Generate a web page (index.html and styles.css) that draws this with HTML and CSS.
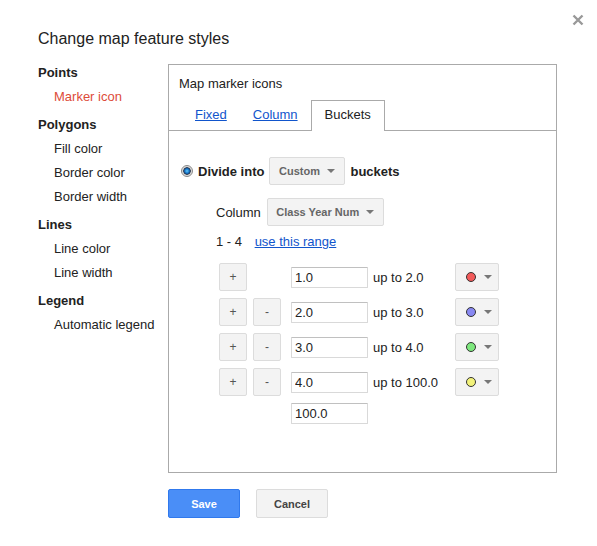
FILE: index.html
```html
<!DOCTYPE html>
<html lang="en">
<head>
  <meta charset="UTF-8">
  <title>Change map feature styles</title>
  <link rel="stylesheet" href="styles.css">
</head>
<body>
  <div class="dialog">
    <a class="close" href="#" title="Close">
      <svg width="12" height="12" viewBox="0 0 12 12"><path d="M1.5 1.5L10.5 10.5M10.5 1.5L1.5 10.5" stroke="#999" stroke-width="2.4"/></svg>
    </a>
    <h1 class="title">Change map feature styles</h1>
    <div class="main flex">
      <ul class="nav">
        <li class="nav-head">Points</li>
        <li class="nav-item active">Marker icon</li>
        <li class="nav-head">Polygons</li>
        <li class="nav-item">Fill color</li>
        <li class="nav-item">Border color</li>
        <li class="nav-item">Border width</li>
        <li class="nav-head">Lines</li>
        <li class="nav-item">Line color</li>
        <li class="nav-item">Line width</li>
        <li class="nav-head">Legend</li>
        <li class="nav-item">Automatic legend</li>
      </ul>
      <div class="panel">
        <div class="panel-title">Map marker icons</div>
        <div class="tabs flex">
          <a class="tab" href="#">Fixed</a>
          <a class="tab" href="#">Column</a>
          <span class="tab tab-on">Buckets</span>
        </div>
        <div class="panel-body">
          <div class="flex flex-align-center">
            <span class="radio"></span>
            <b class="strong">Divide into</b>
            <span class="btn drop drop-custom">Custom <i class="caret"></i></span>
            <b class="strong">buckets</b>
          </div>
          <div class="sub">
            <div class="flex flex-align-center col-row">
              <span class="col-label">Column</span>
              <span class="btn drop">Class Year Num <i class="caret"></i></span>
            </div>
            <div class="range">1 - 4 <a href="#">use this range</a></div>
            <div class="buckets">
              <div class="bucket flex flex-align-center">
                <span class="btn sq">+</span>
                <span class="sq-gap"></span>
                <input type="text" value="1.0">
                <span class="upto">up to 2.0</span>
                <span class="btn color"><i class="dot" style="background:#f25a5a"></i><i class="caret"></i></span>
              </div>
              <div class="bucket flex flex-align-center">
                <span class="btn sq">+</span>
                <span class="btn sq">-</span>
                <input type="text" value="2.0">
                <span class="upto">up to 3.0</span>
                <span class="btn color"><i class="dot" style="background:#8888f2"></i><i class="caret"></i></span>
              </div>
              <div class="bucket flex flex-align-center">
                <span class="btn sq">+</span>
                <span class="btn sq">-</span>
                <input type="text" value="3.0">
                <span class="upto">up to 4.0</span>
                <span class="btn color"><i class="dot" style="background:#7ee87e"></i><i class="caret"></i></span>
              </div>
              <div class="bucket flex flex-align-center">
                <span class="btn sq">+</span>
                <span class="btn sq">-</span>
                <input type="text" value="4.0">
                <span class="upto">up to 100.0</span>
                <span class="btn color"><i class="dot" style="background:#f2f27a"></i><i class="caret"></i></span>
              </div>
              <div class="bucket last flex">
                <span class="sq-gap"></span>
                <span class="sq-gap"></span>
                <input type="text" value="100.0">
              </div>
            </div>
          </div>
        </div>
      </div>
    </div>
    <div class="actions flex">
      <span class="btn btn-blue">Save</span>
      <span class="btn btn-cancel">Cancel</span>
    </div>
  </div>
</body>
</html>
```

FILE: styles.css
```css
*{
  margin: 0;
  padding: 0;
  box-sizing: border-box;
}
.flex{display:flex;}
.flex-align-center{align-items:center;}

body{
  background: #fff;
  font-family: "Liberation Sans", Arial, sans-serif;
  font-size: 13px;
  color: #222;
}
.dialog{
  position: relative;
  width: 597px;
  height: 546px;
  padding: 29px 0 0 38px;
}
.close{
  position: absolute;
  top: 14px;
  left: 572px;
  width: 12px;
  height: 12px;
}
.close svg{display:block;}
.title{
  font-size: 16px;
  font-weight: normal;
  line-height: 20px;
  color: #222;
  margin-bottom: 11px;
}

/* left nav */
.nav{
  list-style: none;
  width: 130px;
  padding-top: 1px;
}
.nav li{
  line-height: 24px;
  white-space: nowrap;
}
.nav-head{
  font-weight: bold;
  margin-top: 4px;
}
.nav-head:first-child{margin-top:0;}
.nav-item{
  padding-left: 16px;
}
.nav-item.active{
  color: #dd4b39;
}

/* panel */
.panel{
  margin-top: 4px;
  width: 389px;
  height: 409px;
  border: 1px solid #aaa;
}
.panel-title{
  padding: 11px 0 0 10px;
  line-height: 16px;
}
.tabs{
  margin-top: 8px;
  padding-left: 13px;
  border-bottom: 1px solid #aaa;
  height: 31px;
}
.tab{
  display: block;
  padding: 0 13px;
  line-height: 30px;
  color: #15c;
  text-decoration: underline;
}
.tab-on{
  color: #222;
  text-decoration: none;
  background: #fff;
  border: 1px solid #aaa;
  border-bottom: 0;
  height: 31px;
  line-height: 28px;
  padding: 0 13px;
}
.panel-body{
  padding: 26px 0 0 12px;
}
.radio{
  width: 12px;
  height: 12px;
  border-radius: 50%;
  border: 1px solid #888;
  background: radial-gradient(circle at 50% 50%, #6cf 0, #2a8fd8 1.5px, #1560a8 2.6px, #1a2a44 3.4px, #ccc 4px, #e4e4e4 5px, #f4f4f4 6px);
  margin-right: 5px;
}
.strong{
  font-weight: bold;
}

/* google style buttons */
.btn{
  display: inline-flex;
  align-items: center;
  justify-content: center;
  height: 28px;
  border: 1px solid #dcdcdc;
  border-radius: 2px;
  background: #f3f3f3;
  color: #444;
  font-size: 11px;
  font-weight: bold;
  white-space: nowrap;
}
.drop{
  padding: 0 10px 0 9px;
  color: #666;
  margin: 0 5px 0 5px;
}
.drop-custom{
  width: 76px;
  margin: 0 5px 0 5px;
}
.caret{
  display: inline-block;
  width: 0;
  height: 0;
  border-left: 4px solid transparent;
  border-right: 4px solid transparent;
  border-top: 4px solid #777;
  margin-left: 7px;
}
.sub{
  padding-left: 35px;
}
.col-row{
  margin-top: 13px;
}
.col-row .drop{
  width: 117px;
  padding: 0 8px;
  margin-left: 6px;
}
.range{
  margin-top: 8px;
  line-height: 16px;
}
.range a{
  color: #15c;
  margin-left: 9px;
}
.buckets{
  margin-top: 13px;
  padding-left: 3px;
}
.bucket{
  height: 28px;
  margin-bottom: 7px;
}
.bucket.last{
  height: 21px;
}
.sq{
  width: 28px;
  margin-right: 6px;
  color: #555;
  font-weight: normal;
  font-size: 12px;
}
.sq-gap{
  width: 28px;
  margin-right: 6px;
}
.bucket input{
  width: 77px;
  height: 21px;
  margin-left: 4px;
  border: 1px solid #d9d9d9;
  border-top-color: #c0c0c0;
  border-radius: 1px;
  padding: 0 3px;
  font-family: "Liberation Sans", Arial, sans-serif;
  font-size: 13px;
  color: #222;
  outline: 0;
}
.upto{
  width: 82px;
  margin-left: 5px;
}
.color{
  width: 44px;
  padding-left: 3px;
}
.dot{
  display: inline-block;
  width: 10px;
  height: 10px;
  border-radius: 50%;
  border: 1px solid #333;
}
.color .caret{margin-left: 8px;}

/* footer */
.actions{
  margin: 16px 0 0 130px;
}
.btn-blue{
  width: 72px;
  height: 29px;
  background: #4a8ef7;
  border-color: #3079ed;
  color: #fff;
  margin-right: 16px;
}
.btn-cancel{
  width: 72px;
  height: 29px;
}
```
